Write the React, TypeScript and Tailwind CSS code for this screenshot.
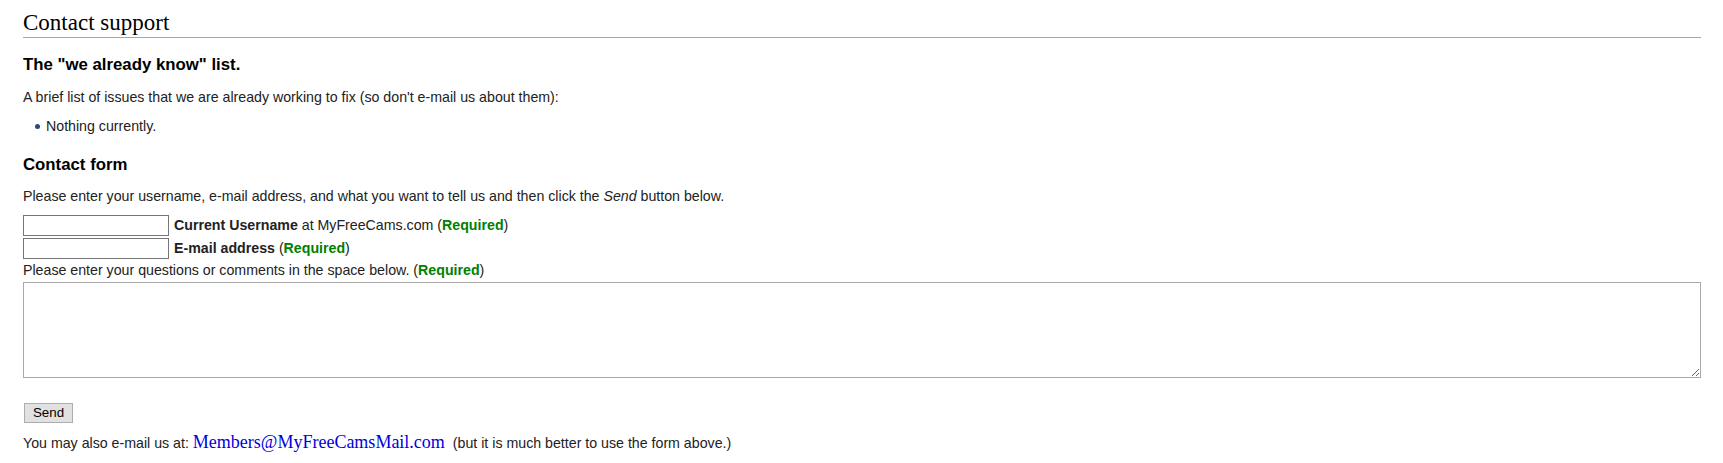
export default function App() {
  return (
    <div className="min-h-[463px] bg-white pl-[23px] pr-[22px] font-['Liberation_Sans',Arial,sans-serif] text-[14.2px] text-[#222]">
      <h2 className="border-b border-[#a2a9b1] pt-[11px] pb-[2px] font-['Liberation_Serif','Times_New_Roman',serif] text-[23px] leading-[24px] font-normal text-black">
        Contact support
      </h2>

      <h3 className="mt-[17px] text-[16.8px] leading-[20px] font-bold text-black">
        The "we already know" list.
      </h3>
      <p className="mt-[12px] leading-[20px]">
        A brief list of issues that we are already working to fix (so don't e-mail us about them):
      </p>
      <ul className="mt-[9px] pl-[12px]">
        <li className="flex items-center leading-[20px]">
          <span className="mr-[6px] inline-block h-[5px] w-[5px] rounded-full bg-[#2a4b7c]" />
          Nothing currently.
        </li>
      </ul>

      <h3 className="mt-[19px] text-[16.8px] leading-[20px] font-bold text-black">Contact form</h3>
      <p className="mt-[11px] leading-[20px]">
        Please enter your username, e-mail address, and what you want to tell us and then click the{' '}
        <i>Send</i> button below.
      </p>

      <form className="mt-[8px]" onSubmit={(e) => e.preventDefault()}>
        <div className="flex h-[23px] items-center">
          <input
            type="text"
            className="h-[21px] w-[146px] border border-[#767676] bg-white px-[2px] text-[13px] outline-none"
          />
          <span className="ml-[5px]">
            <b>Current Username</b> at MyFreeCams.com (<b className="text-[#008000]">Required</b>)
          </span>
        </div>
        <div className="flex h-[23px] items-center">
          <input
            type="text"
            className="h-[21px] w-[146px] border border-[#767676] bg-white px-[2px] text-[13px] outline-none"
          />
          <span className="ml-[5px]">
            <b>E-mail address</b> (<b className="text-[#008000]">Required</b>)
          </span>
        </div>
        <p className="leading-[20px]">
          Please enter your questions or comments in the space below. (
          <b className="text-[#008000]">Required</b>)
        </p>
        <textarea className="mt-[2px] block h-[96px] w-full border border-[#a9a9a9] bg-white p-[2px] text-[13px] outline-none" />

        <button
          type="submit"
          className="mt-[25px] ml-[1px] block h-[20px] w-[49px] border border-[#adadad] bg-[#e1e1e1] text-center text-[13.33px] leading-[18px] text-black"
        >
          Send
        </button>
      </form>

      <p className="mt-[10px] leading-[20px]">
        You may also e-mail us at:{' '}
        <a
          href="#"
          className="mr-[4px] font-['Liberation_Serif','Times_New_Roman',serif] text-[18px] leading-[14px] text-[#0000e0]"
        >
          Members@MyFreeCamsMail.com
        </a>{' '}
        (but it is much better to use the form above.)
      </p>
    </div>
  );
}
